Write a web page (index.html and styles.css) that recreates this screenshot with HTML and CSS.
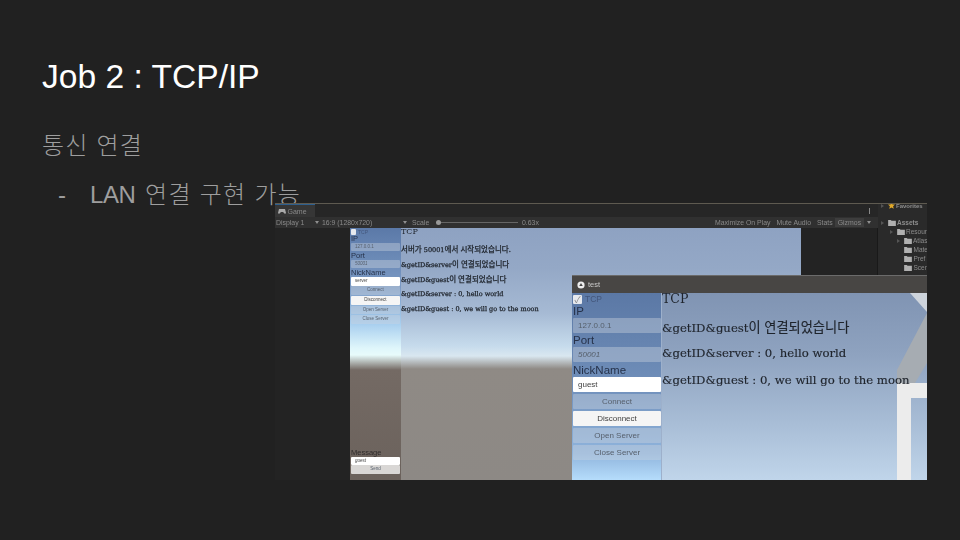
FILE: index.html
```html
<!DOCTYPE html>
<html lang="ko">

<head>
    <meta charset="UTF-8">
    <meta name="viewport" content="width=device-width, initial-scale=1.0">
    <title>Job 2 : TCP/IP</title>
    <link rel="stylesheet" href="styles.css">
</head>

<body>
    <div class="slide">
        <h1>Job 2 : TCP/IP</h1>
        <p class="sub">통신 연결</p>
        <ul class="points">
            <li><span class="dash">-</span><span class="lan">LAN</span><span class="wide">연결 구현 가능</span></li>
        </ul>

        <!-- 유니티 에디터 스크린샷 -->
        <div class="shot">
            <div class="tabs">
                <div class="tab">
                    <svg class="pad" width="8" height="5" viewBox="0 0 8 5"><path d="M1 0h6l1 4-1 1-2-2H3L1 5 0 4z" fill="#aaa"/></svg>
                    Game
                </div>
                <span class="dots"></span>
            </div>
            <div class="toolbar">
                <span class="t-display">Display 1</span><i class="arrow"></i>
                <span class="t-aspect">16:9 (1280x720)</span><i class="arrow"></i>
                <span class="t-scale">Scale</span>
                <span class="slider"><b></b></span>
                <span class="t-value">0.63x</span>
                <span class="t-right">Maximize On Play</span>
                <span class="t-right">Mute Audio</span>
                <span class="t-right">Stats</span>
                <span class="t-gizmos">Gizmos</span><i class="arrow arrow-end"></i>
            </div>
            <div class="body">
                <div class="void void-left"></div>
                <div class="scene">
                    <div class="panel panel-mini">
                        <div class="check"><span class="box"></span>TCP</div>
                        <div class="label">IP</div>
                        <div class="field">127.0.0.1</div>
                        <div class="label">Port</div>
                        <div class="field hint">50001</div>
                        <div class="label">NickName</div>
                        <div class="field on">server</div>
                        <div class="btn">Connect</div>
                        <div class="btn on">Disconnect</div>
                        <div class="btn">Open Server</div>
                        <div class="btn">Close Server</div>
                        <div class="message">
                            <div class="label label-msg">Message</div>
                            <div class="field on hint">guest</div>
                            <div class="btn send">Send</div>
                        </div>
                    </div>
                    <div class="log log-mini">
                        <p>TCP</p>
                        <p><span class="ko">서버가 </span>50001<span class="ko">에서 시작되었습니다.</span></p>
                        <p>&amp;getID&amp;server<span class="ko">이 연결되었습니다</span></p>
                        <p>&amp;getID&amp;guest<span class="ko">이 연결되었습니다</span></p>
                        <p>&amp;getID&amp;server : 0, hello world</p>
                        <p>&amp;getID&amp;guest : 0, we will go to the moon</p>
                    </div>
                </div>
                <div class="void void-right"></div>
                <div class="project">
                    <div class="row row-fav"><i class="tri"></i><svg width="7" height="7" viewBox="0 0 10 10"><path d="M5 0l1.5 3.4 3.5.3-2.7 2.3.9 3.6L5 7.7 1.800 9.600l.9-3.600L0 3.700l3.500-.3z" fill="#e0a92a"/></svg><b>Favorites</b></div>
                    <div class="row row-assets"><i class="tri"></i><svg width="8" height="6" viewBox="0 0 9 7"><path d="M0 0h3l1 1h5v6H0z" fill="#b0b0b0"/></svg><b>Assets</b></div>
                    <div class="row ind1"><i class="tri"></i><svg width="8" height="6" viewBox="0 0 9 7"><path d="M0 0h3l1 1h5v6H0z" fill="#b0b0b0"/></svg>Resour</div>
                    <div class="row ind2"><i class="tri"></i><svg width="8" height="6" viewBox="0 0 9 7"><path d="M0 0h3l1 1h5v6H0z" fill="#b0b0b0"/></svg>Atlas</div>
                    <div class="row ind3"><svg width="8" height="6" viewBox="0 0 9 7"><path d="M0 0h3l1 1h5v6H0z" fill="#b0b0b0"/></svg>Mate</div>
                    <div class="row ind3"><svg width="8" height="6" viewBox="0 0 9 7"><path d="M0 0h3l1 1h5v6H0z" fill="#b0b0b0"/></svg>Pref</div>
                    <div class="row ind3"><svg width="8" height="6" viewBox="0 0 9 7"><path d="M0 0h3l1 1h5v6H0z" fill="#b0b0b0"/></svg>Scen</div>
                </div>
            </div>

            <!-- 빌드된 test 창 -->
            <div class="window">
                <div class="titlebar">
                    <svg width="8" height="8" viewBox="0 0 10 10"><circle cx="5" cy="5" r="4.5" fill="#eee"/><path d="M5 2.500L7.200 6.200H2.800z" fill="#444"/></svg>
                    test
                </div>
                <div class="content">
                    <svg class="decor" width="265" height="187" viewBox="0 0 265 187">
                        <path d="M248 0h17v19z" fill="#ced4dc"/>
                        <path d="M265 20L235 77v13h18l12-20z" fill="#a6acb2"/>
                        <path d="M235 90h30v15h-16v82h-14z" fill="#ececec"/>
                    </svg>
                    <div class="panel panel-big">
                        <div class="check"><span class="box">✓</span>TCP</div>
                        <div class="label">IP</div>
                        <div class="field">127.0.0.1</div>
                        <div class="label">Port</div>
                        <div class="field hint">50001</div>
                        <div class="label">NickName</div>
                        <div class="field on">guest</div>
                        <div class="btn">Connect</div>
                        <div class="btn on">Disconnect</div>
                        <div class="btn">Open Server</div>
                        <div class="btn">Close Server</div>
                    </div>
                    <div class="log log-big">
                        <p>TCP</p>
                        <p>&amp;getID&amp;guest<span class="ko">이 연결되었습니다</span></p>
                        <p>&amp;getID&amp;server : 0, hello world</p>
                        <p>&amp;getID&amp;guest : 0, we will go to the moon</p>
                    </div>
                </div>
            </div>
        </div>
    </div>
</body>

</html>
```
FILE: styles.css
```css
* {
    margin: 0;
    padding: 0;
    box-sizing: border-box;
}

ul {
    list-style: none;
}

body {
    background-color: #212121;
}

.slide {
    position: relative;
    width: 960px;
    height: 540px;
    padding: 57px 42px 0;
    overflow: hidden;
    background-color: #212121;
    font-family: "Liberation Sans", "Noto Sans CJK KR", sans-serif;
}

h1 {
    font-size: 33.6px;
    font-weight: 400;
    line-height: 40px;
    color: #fff;
}

.sub {
    margin-top: 33px;
    font-size: 24px;
    font-weight: 300;
    line-height: 32px;
    letter-spacing: 1.2px;
    color: #9e9e9e;
}

.points {
    margin-top: 17px;
    font-size: 24px;
    font-weight: 300;
    line-height: 32px;
    color: #9e9e9e;
}

.points li {
    display: flex;
    padding-left: 16px;
}

.dash {
    width: 32px;
}

.lan {
    width: 55px;
    letter-spacing: -.4px;
}

.wide {
    letter-spacing: 1.300px;
}

/* 스크린샷 */
.shot {
    position: absolute;
    top: 203px;
    left: 275px;
    width: 652px;
    height: 277px;
    display: flex;
    flex-direction: column;
    border-top: 1px solid #5e5a50;
    background-color: #232323;
    overflow: hidden;
    color: #8d8d8d;
    font-size: 7px;
    filter: blur(.6px);
}

.tabs {
    position: relative;
    height: 13px;
    flex: none;
    background-color: #262626;
}

.tab {
    display: flex;
    align-items: center;
    gap: 1.500px;
    width: 40px;
    height: 13px;
    padding: 1px 0 0 3px;
    background-color: #363636;
    border-top: 1px solid #2d5f8f;
    color: #8a8a8a;
}

.dots {
    position: absolute;
    top: 4px;
    left: 594px;
    width: 1px;
    height: 6px;
    background-color: #888;
}

.toolbar {
    display: flex;
    align-items: center;
    height: 11px;
    flex: none;
    padding: 0 0 0 1px;
    background-color: #303030;
    white-space: nowrap;
    color: #8a8a8a;
    font-size: 6.9px;
}

.arrow {
    width: 0;
    height: 0;
    border-left: 2.500px solid transparent;
    border-right: 2.500px solid transparent;
    border-top: 3px solid #8f8f8f;
}

.t-display {
    width: 39px;
}

.t-aspect {
    width: 81px;
    margin-left: 3px;
}

.t-scale {
    margin-left: 5px;
    width: 24px;
}

.slider {
    position: relative;
    width: 82px;
    height: 1px;
    margin-right: 4px;
    background-color: #666;
}

.slider b {
    position: absolute;
    top: -2px;
    left: 0;
    width: 5px;
    height: 5px;
    border-radius: 50%;
    background-color: #999;
}

.t-value {
    width: 193px;
}

.t-right {
    margin-right: 6px;
}

.t-gizmos {
    padding: 1px 3px;
    margin-left: -4px;
    margin-right: 3px;
    background-color: #3d3d3d;
}

.body {
    display: flex;
    flex: 1;
    min-height: 0;
}

.void {
    background-color: #232323;
}

.void-left {
    width: 75px;
}

.void-right {
    width: 77px;
    border-right: 1px solid #191919;
}

.scene {
    display: flex;
    width: 451px;
    background: linear-gradient(180deg, #8ea2c2 0, #94a8c6 40px, #a6bad4 85px, #c6dbec 118px, #d9e7f0 128px, #8f8a85 141px, #8d8985 100%);
}

.panel {
    display: flex;
    flex-direction: column;
    flex: none;
    color: #26324a;
}

.panel-mini {
    width: 51px;
    padding: 1px 0 0 1px;
    background: linear-gradient(180deg, #5b79a8 0, #7b9ac4 60px, #a6cdee 95px, #dff6fb 120px, #e8fbfb 127px, #746a64 142px, #6b625c 100%);
    font-size: 7px;
}

.check {
    display: flex;
    align-items: center;
    color: #44577c;
}

.box {
    flex: none;
    display: flex;
    align-items: center;
    justify-content: center;
    background-color: #e6e9ee;
    border-radius: 1px;
    color: #888;
}

.panel-mini .check {
    height: 5.500px;
    font-size: 5px;
}

.panel-mini .box {
    width: 5px;
    height: 5.500px;
    margin-right: 2px;
}

.panel-mini .label {
    height: 8px;
    line-height: 8px;
    font-size: 7.5px;
}

.label-msg {
    color: #2f2b2b;
}

.field,
.btn {
    border-radius: 1px;
    background-color: rgba(205, 212, 222, .4);
    color: #565f6b;
}

.field.on,
.btn.on {
    background-color: #f5f5f5;
    color: #3f3f3f;
}

.field.on {
    background-color: #fff;
}

.hint {
    font-style: italic;
}

.btn {
    text-align: center;
}

.panel-mini .field,
.panel-mini .btn {
    width: 49px;
    height: 8.500px;
    line-height: 8.500px;
    font-size: 4.500px;
}

.panel-mini .field {
    margin-bottom: .8px;
    padding-left: 4px;
}

.panel-mini .btn {
    margin-bottom: 1.200px;
}

.message {
    margin-top: auto;
    padding-bottom: 5px;
}

.panel-mini .message .field {
    margin-bottom: 0;
}

.panel-mini .send {
    background-color: #d9d7d5;
}

.log {
    font-family: "DejaVu Serif", "Noto Sans CJK KR", serif;
    color: #20262e;
    white-space: nowrap;
}

.log .ko {
    font-family: "Noto Sans CJK KR", sans-serif;
}

.log-mini {
    font-size: 6.500px;
    -webkit-text-stroke: .25px #20262e;
}

.log-mini .ko {
    font-size: 7.500px;
}

.log-mini p {
    height: 15.200px;
    line-height: 15.200px;
}

.log-mini p:first-child {
    height: 13px;
    line-height: 8px;
    font-size: 8px;
    -webkit-text-stroke: 0;
}

.project {
    flex: 1;
    padding: 0 0 0 3px;
    background-color: #2a2a2a;
    font-size: 6.500px;
    color: #8c8c8c;
    white-space: nowrap;
    overflow: hidden;
    margin-top: -24px;
    position: relative;
}

.row {
    display: flex;
    align-items: center;
    gap: 1.500px;
    height: 9px;
}

.row svg {
    flex: none;
}

.row b {
    color: #8f8f8f;
}

.row-fav {
    margin-top: -3px;
    font-size: 6px;
}

.row-assets {
    margin-top: 8px;
}

.tri {
    flex: none;
    width: 0;
    height: 0;
    margin-right: 2px;
    border-top: 2px solid transparent;
    border-bottom: 2px solid transparent;
    border-left: 3px solid #555;
}

.ind1 {
    padding-left: 9px;
}

.ind2 {
    padding-left: 16px;
}

.ind3 {
    padding-left: 23px;
}

/* test 창 */
.window {
    position: absolute;
    top: 71px;
    left: 297px;
    width: 355px;
    height: 205px;
    display: flex;
    flex-direction: column;
    border-top: 1px solid #6b6b6b;
}

.titlebar {
    display: flex;
    align-items: center;
    gap: 3px;
    height: 17px;
    flex: none;
    padding-left: 5px;
    background-color: #484644;
    color: #c9c9c9;
    font-size: 7.500px;
}

.content {
    position: relative;
    display: flex;
    flex: 1;
    background: linear-gradient(180deg, #8094b3 0, #8ea2bf 60px, #a8bdd6 130px, #c0d5ea 100%);
}

.decor {
    position: absolute;
    top: 0;
    left: 90px;
}

.panel-big {
    position: relative;
    width: 90px;
    padding: 1px 0 0 1px;
    border-right: 1px solid #9db0cb;
    background: linear-gradient(180deg, #5b78a5 0, #6f8eb9 90px, #8fb4dc 160px, #b5dcfb 100%);
}

.panel-big .check {
    height: 10px;
    font-size: 8.500px;
}

.panel-big .box {
    width: 9px;
    height: 9px;
    margin-right: 3px;
    font-size: 9px;
}

.panel-big .label {
    height: 13px;
    margin-top: .7px;
    line-height: 13px;
    font-size: 11.500px;
}

.panel-big .field,
.panel-big .btn {
    width: 88px;
    height: 15px;
    margin-bottom: 2px;
    line-height: 15px;
    font-size: 8px;
}

.panel-big .field {
    padding-left: 5px;
    margin-bottom: 1px;
}

.panel-big .field.on {
    margin-bottom: 1.600px;
}

.log-big {
    position: relative;
    font-size: 11.700px;
    color: #1f242c;
    -webkit-text-stroke: .15px #1f242c;
}

.log-big .ko {
    font-size: 13.200px;
}

.log-big p {
    height: 27px;
    line-height: 27px;
}

.log-big p:first-child {
    height: 20px;
    line-height: 12px;
    font-size: 12.500px;
    -webkit-text-stroke: 0;
}
```
